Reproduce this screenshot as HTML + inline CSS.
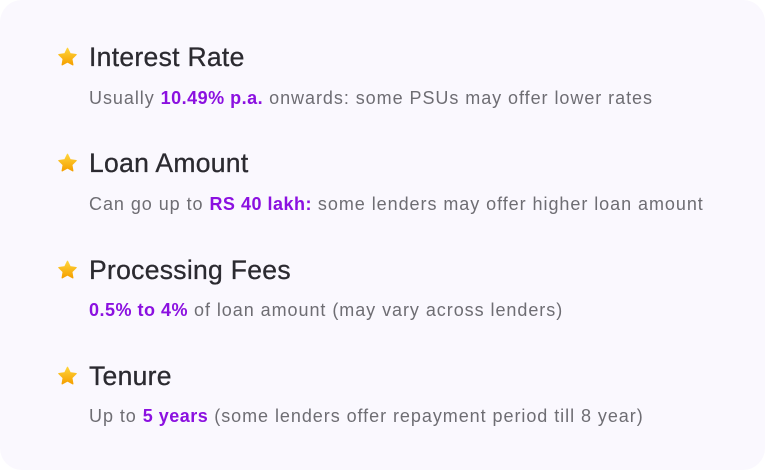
<!DOCTYPE html>
<html><head><style>
html,body{margin:0;padding:0;background:#fff;}
.card{position:absolute;left:0;top:0;width:765px;height:470px;background:#faf8fe;border-radius:22px;}
.h{position:absolute;left:89px;font:26.5px "Liberation Sans",sans-serif;color:#2b2a30;white-space:nowrap;line-height:30px;letter-spacing:0.3px;-webkit-text-stroke:0.3px #2b2a30;}
.b{position:absolute;left:89px;font:18px "Liberation Sans",sans-serif;color:#6e6d73;white-space:nowrap;line-height:22px;letter-spacing:0.95px;}
.b span{color:#8b10e0;font-weight:bold;letter-spacing:0.5px;}
svg{position:absolute;left:57px;width:21px;height:20px;}
</style></head><body>
<div class="card">
<svg style="top:47px" viewBox="0 0 24 24"><defs><linearGradient id="g" x1="0" y1="0" x2="0" y2="1"><stop offset="0" stop-color="#ffd43a"/><stop offset="1" stop-color="#f5a000"/></linearGradient></defs><path d="M12 1.5l3.2 6.6 7.2 1-5.2 5.1 1.2 7.2L12 18l-6.4 3.4 1.2-7.2L1.6 9.1l7.2-1z" fill="url(#g)" stroke="url(#g)" stroke-linejoin="round" stroke-width="1.5"/></svg>
<div class="h" style="top:42px">Interest Rate</div>
<div class="b" style="top:87px">Usually <span>10.49% p.a.</span> onwards: some PSUs may offer lower rates</div>

<svg style="top:153px" viewBox="0 0 24 24"><path d="M12 1.5l3.2 6.6 7.2 1-5.2 5.1 1.2 7.2L12 18l-6.4 3.4 1.2-7.2L1.6 9.1l7.2-1z" fill="url(#g)" stroke="url(#g)" stroke-linejoin="round" stroke-width="1.5"/></svg>
<div class="h" style="top:148px">Loan Amount</div>
<div class="b" style="top:193px">Can go up to <span>RS 40 lakh:</span> some lenders may offer higher loan amount</div>

<svg style="top:260px" viewBox="0 0 24 24"><path d="M12 1.5l3.2 6.6 7.2 1-5.2 5.1 1.2 7.2L12 18l-6.4 3.4 1.2-7.2L1.6 9.1l7.2-1z" fill="url(#g)" stroke="url(#g)" stroke-linejoin="round" stroke-width="1.5"/></svg>
<div class="h" style="top:255px">Processing Fees</div>
<div class="b" style="top:299px"><span>0.5% to 4%</span> of loan amount (may vary across lenders)</div>

<svg style="top:366px" viewBox="0 0 24 24"><path d="M12 1.5l3.2 6.6 7.2 1-5.2 5.1 1.2 7.2L12 18l-6.4 3.4 1.2-7.2L1.6 9.1l7.2-1z" fill="url(#g)" stroke="url(#g)" stroke-linejoin="round" stroke-width="1.5"/></svg>
<div class="h" style="top:361px">Tenure</div>
<div class="b" style="top:405px">Up to <span>5 years</span> (some lenders offer repayment period till 8 year)</div>
</div>
</body></html>
